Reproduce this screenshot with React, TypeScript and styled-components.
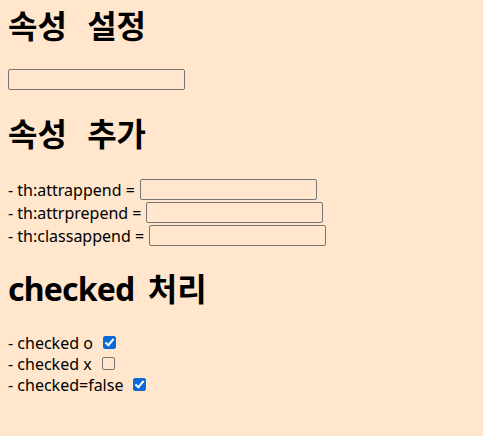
import React from "react";
import styled, { createGlobalStyle } from "styled-components";

const Global = createGlobalStyle`
  html, body { margin: 0; padding: 0; background: #ffe6cc; }
  body { font-family: "Noto Sans", "Noto Sans CJK KR", sans-serif; color: #000; }
`;

const Page = styled.div`
  padding: 4px 8px 40px;
  background: #ffe6cc;
  min-height: 436px;
  box-sizing: border-box;
`;

const Title = styled.h1<{ $mt: number; $ws: number }>`
  margin: ${(p) => p.$mt}px 0 0;
  font-family: "Noto Sans CJK KR", "Noto Sans", sans-serif;
  font-size: 32px;
  font-weight: 700;
  line-height: 40px;
  height: 40px;
  word-spacing: ${(p) => p.$ws}px;
  white-space: pre;
`;

const Latin = styled.span`
  font-family: "Noto Sans", sans-serif;
  letter-spacing: -0.8px;
`;

const TextInput = styled.input`
  display: block;
  box-sizing: border-box;
  width: 177px;
  height: 21px;
  margin: 0;
  padding: 1px 2px;
  border: 1px solid #767676;
  border-radius: 2px;
  background: transparent;
  font-size: 13px;
`;

const Standalone = styled(TextInput)<{ $mt: number }>`
  margin-top: ${(p) => p.$mt}px;
`;

const Rows = styled.div<{ $mt: number }>`
  margin-top: ${(p) => p.$mt}px;
  display: flex;
  flex-direction: column;
`;

const Row = styled.div<{ $h: number }>`
  display: flex;
  align-items: center;
  gap: 5px;
  height: ${(p) => p.$h}px;
  font-size: 16px;
  white-space: pre;
`;

const Check = styled.input`
  appearance: none;
  box-sizing: border-box;
  width: 13px;
  height: 13px;
  margin: 0 0 0 5px;
  border: 1px solid #767676;
  border-radius: 2px;
  background: transparent;
  position: relative;
  &:checked {
    border-color: #0b6ad8;
    background: #0b6ad8;
  }
  &:checked::after {
    content: "";
    position: absolute;
    left: 3px;
    top: 0px;
    width: 3px;
    height: 7px;
    border: solid #fff;
    border-width: 0 2px 2px 0;
    transform: rotate(40deg);
  }
`;

export default function App() {
  return (
    <>
      <Global />
      <Page>
        <Title $mt={0} $ws={13}>속성 설정</Title>
        <Standalone $mt={25} type="text" />
        <Title $mt={22} $ws={13}>속성 추가</Title>
        <Rows $mt={26}>
          <Row $h={23}>- th:attrappend =<TextInput type="text" /></Row>
          <Row $h={23}>- th:attrprepend =<TextInput type="text" /></Row>
          <Row $h={23}>- th:classappend =<TextInput type="text" /></Row>
        </Rows>
        <Title $mt={20} $ws={6}><Latin>checked</Latin> 처리</Title>
        <Rows $mt={25}>
          <Row $h={21}>- checked o<Check type="checkbox" defaultChecked /></Row>
          <Row $h={21}>- checked x<Check type="checkbox" /></Row>
          <Row $h={21}>- checked=false<Check type="checkbox" defaultChecked /></Row>
        </Rows>
      </Page>
    </>
  );
}
